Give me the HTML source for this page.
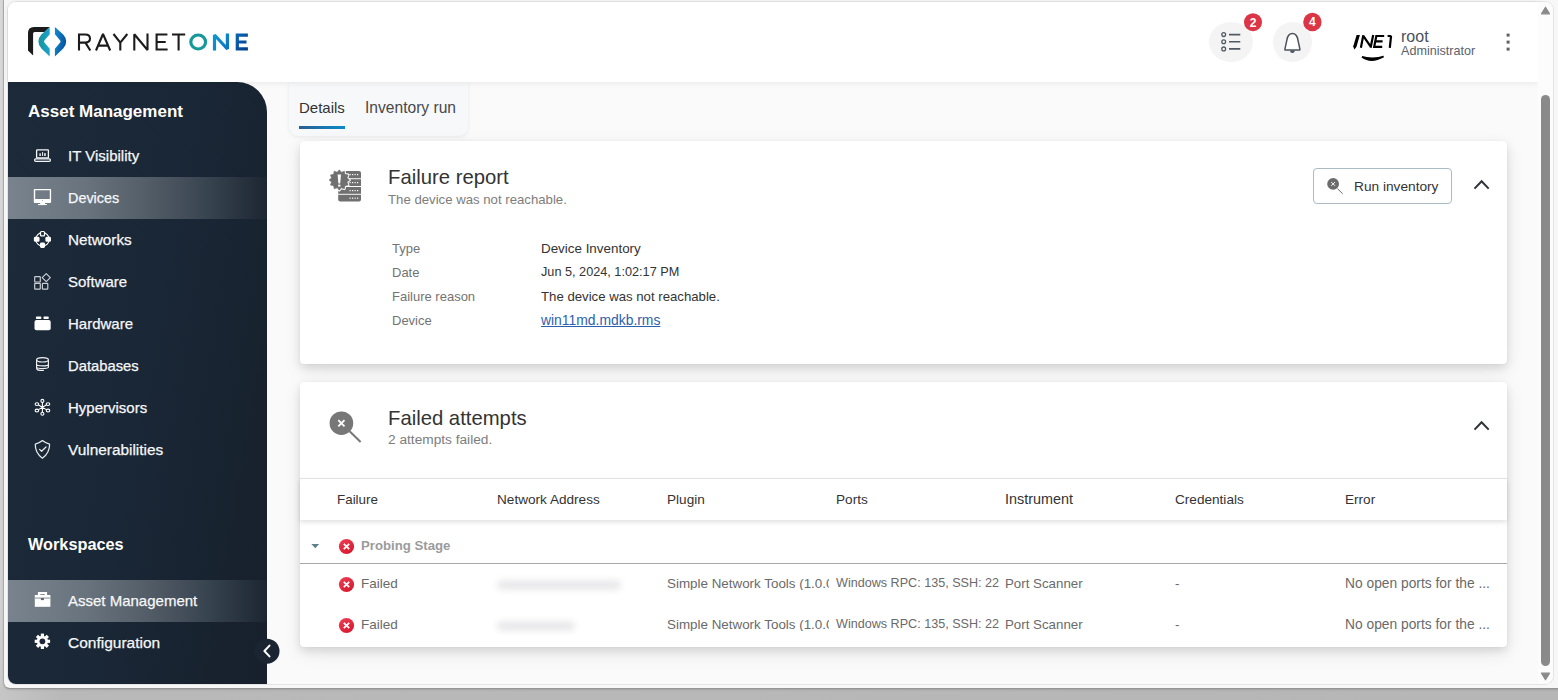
<!DOCTYPE html>
<html><head><meta charset="utf-8">
<style>
*{box-sizing:border-box;margin:0;padding:0}
html,body{width:1558px;height:700px;overflow:hidden}
body{position:relative;background:linear-gradient(#d8d8d8,#d2d2d2 600px,#c8c8c8);font-family:"Liberation Sans",sans-serif;color:#333}
.a{position:absolute}
.t{position:absolute;white-space:nowrap;line-height:1}
#bottom{left:0;top:687px;width:1558px;height:13px;background:linear-gradient(90deg,#c6c6c6 0,#b9b9b9 60px,#b6b6b6 100%)}
#frame{left:3px;top:-10px;width:1565px;height:699px;background:#f7f7f7;border-left:1px solid #a9a9a9;border-bottom:1px solid #959595;border-radius:0 0 0 7px;box-shadow:0 1px 2px rgba(0,0,0,.12)}
#lline{left:3px;top:0;width:1px;height:688px;background:#afafaf}
#win{left:8px;top:2px;width:1545px;height:682px;border-radius:8px;background:#fafafa;box-shadow:0 0 0 1px #e4e4e4}
#header{left:8px;top:2px;width:1530px;height:80px;background:#fff;border-radius:8px 0 0 0;box-shadow:0 1px 6px rgba(0,0,0,.08);z-index:3}
#sb{left:1538px;top:2px;width:15px;height:682px;background:#fcfcfc;border-radius:0 8px 8px 0;z-index:4}
#thumb{left:3px;top:93px;width:9px;height:571px;border-radius:5px;background:#8a8a8a}
#side{left:8px;top:82px;width:259px;height:602px;border-radius:0 30px 0 8px;background:linear-gradient(100deg,#1c2a3a 0%,#1a2736 50%,#17202c 100%);z-index:2;overflow:hidden}
.nav{position:absolute;left:0;width:259px;height:42px}
.nav.act{background:linear-gradient(90deg,#78838d 0%,#68737d 30%,#56616b 50%,#3b4653 75%,#1c2633 100%)}
.nav .lbl{position:absolute;left:60px;top:0;line-height:42px;font-size:15px;color:#f6f7f8;white-space:nowrap;-webkit-text-stroke:0.25px #f6f7f8}
.nav svg{position:absolute;left:26px;top:12px}
.sh{position:absolute;left:20px;font-size:17px;font-weight:bold;color:#fff;line-height:1;white-space:nowrap}
.card{position:absolute;background:#fff;border-radius:4px;box-shadow:0 4px 8px rgba(0,0,0,.09),0 6px 18px rgba(0,0,0,.09),0 0 2px rgba(0,0,0,.06)}
</style></head><body>
<div id="bottom" class="a"></div>
<div id="frame" class="a"></div>

<div id="win" class="a"></div>

<!-- header -->
<div id="header" class="a"></div>
<div id="sb" class="a"><div id="thumb" class="a"></div>
  <svg class="a" style="left:0;top:0" width="15" height="682"><path d="M3.5 11.8 L7.5 5.2 L11.5 11.8 Z" fill="#8a8a8a" stroke="#8a8a8a" stroke-width="1.2" stroke-linejoin="round"/><path d="M3.5 671.2 L7.5 677.8 L11.5 671.2 Z" fill="#8a8a8a" stroke="#8a8a8a" stroke-width="1.2" stroke-linejoin="round"/></svg>
</div>
<svg class="a" style="left:0;top:0;z-index:5" width="1558" height="82">
  <defs>
    <linearGradient id="gT" x1="0" y1="0.5" x2="1" y2="0.5"><stop offset="0" stop-color="#16939a"/><stop offset="1" stop-color="#19a3d0"/></linearGradient>
    <linearGradient id="gB" x1="0" y1="0.3" x2="1" y2="0.7"><stop offset="0" stop-color="#1088d0"/><stop offset="1" stop-color="#0a4c98"/></linearGradient>
    <linearGradient id="gN" x1="0" y1="0" x2="1" y2="1"><stop offset="0" stop-color="#0b99d6"/><stop offset="1" stop-color="#0a74bd"/></linearGradient>
    <linearGradient id="gE" x1="0" y1="0" x2="1" y2="1"><stop offset="0" stop-color="#0b63b0"/><stop offset="1" stop-color="#023f8c"/></linearGradient>
  </defs>
  <!-- logo mark -->
  <path d="M28 50.6 L28 33 Q28 27 34 27 L49.7 27 L44.6 32 L34.6 32 Q33.1 32 33.1 33.5 L33.1 55.4 Z" fill="#1b1b1b"/>
  <path d="M49.7 27 L49.7 34.2 L44.4 40.6 Q43.8 41.5 44.4 42.4 L49.7 48.8 L49.7 56.6 L41.4 48.6 Q38.4 45.4 38.4 41.5 Q38.4 37.6 41.4 34.4 Z" fill="url(#gT)"/>
  <path d="M54.9 27 L54.9 34.2 L60.2 40.6 Q60.8 41.5 60.2 42.4 L54.9 48.8 L54.9 56.6 L63.2 48.6 Q66.2 45.4 66.2 41.5 Q66.2 37.6 63.2 34.4 Z" fill="url(#gB)"/>
  <!-- letters -->
  <g fill="none" stroke="#1b1b1b" stroke-width="2.1" stroke-linecap="butt" stroke-linejoin="miter" stroke-miterlimit="1.5">
    <path d="M79 50.5 V34.5 H85.2 Q90 34.5 90 38.6 Q90 42.6 85.2 42.6 H79 M85.4 42.6 L90.3 50.5"/>
    <path d="M96 50.5 L103 34 L110.2 50.5 M98.2 45.6 H107.9"/>
    <path d="M113.5 34 L120.3 42.6 L127.3 34 M120.3 42.6 V50.5"/>
    <path d="M134.3 50.5 V34.3 L147.5 50 V33.5"/>
    <path d="M167.4 34.5 H156.6 V49.5 H167.6 M156.6 42 H165.7"/>
    <path d="M172 34.5 H185.2 M178.6 34.5 V50.5"/>
  </g>
  <ellipse cx="198.2" cy="42" rx="7.4" ry="7" fill="none" stroke="#17989a" stroke-width="3.2"/>
  <path d="M214.5 50.5 V35 L227.4 49 V33.5" fill="none" stroke="url(#gN)" stroke-width="3.2" stroke-miterlimit="1.5"/>
  <path d="M247.9 35.1 H237.3 V48.9 H247.9 M237.3 42 H246.5" fill="none" stroke="url(#gE)" stroke-width="3.2"/>
  <!-- list button -->
  <ellipse cx="1231" cy="42" rx="22" ry="20" fill="#f4f4f4"/>
  <g fill="none" stroke="#525a63" stroke-width="1.3"><circle cx="1223.7" cy="34.6" r="1.9"/><circle cx="1223.7" cy="41.7" r="1.9"/><circle cx="1223.7" cy="48.9" r="1.9"/></g>
  <g stroke="#525a63" stroke-width="1.6"><path d="M1229 34.6 H1240.3 M1229 41.7 H1240.3 M1229 48.9 H1240.3"/></g>
  <circle cx="1253" cy="22.2" r="9" fill="#dc3545"/>
  <text x="1253" y="26.6" text-anchor="middle" font-family="Liberation Sans" font-weight="bold" font-size="12" fill="#fff">2</text>
  <!-- bell -->
  <ellipse cx="1292.5" cy="42" rx="19.5" ry="20" fill="#f4f4f4"/>
  <path d="M1284.9 49.2 L1286.9 39.8 Q1288 33.6 1292.4 33.6 Q1296.8 33.6 1297.9 39.8 L1299.9 49.2 Q1300.2 50 1299.3 50 L1285.5 50 Q1284.6 50 1284.9 49.2 Z" fill="#fff" stroke="#4b535c" stroke-width="1.5" stroke-linejoin="round"/>
  <path d="M1289.9 50.4 Q1290.2 52.9 1292.4 52.9 Q1294.6 52.9 1294.9 50.4 Z" fill="#4b535c"/>
  <circle cx="1312.4" cy="22" r="9.2" fill="#dc3545"/>
  <text x="1312.4" y="26.4" text-anchor="middle" font-family="Liberation Sans" font-weight="bold" font-size="12" fill="#fff">4</text>
  <!-- avatar -->
  <path d="M1356.6 35 L1359.9 35 L1356.4 47 L1354.4 49.6 L1353.2 46.4 Z" fill="#000"/>
  <g fill="none" stroke="#000" stroke-width="2.2" stroke-linecap="butt">
   <path d="M1363.3 35.1 L1360.9 47.8 M1363.3 35.8 L1371 47.2 M1373.2 35 L1370.6 47.8"/>
   <path d="M1384.2 36 H1376.3 L1374.2 46.8 H1382.2 M1375.3 41.4 H1382.6"/>
   <path d="M1387.6 36 H1390.1 L1391 36.6 L1389.8 47.8"/>
  </g>
  <path d="M1362 56.9 Q1371 63.6 1383.6 56.6 Q1379 58.2 1372.4 58.4 Q1366 58.4 1362 56.9 Z" fill="#000" stroke="#000" stroke-width="1.7"/>
  <!-- kebab -->
  <g fill="#616161"><rect x="1506.6" y="33.6" width="3" height="3"/><rect x="1506.6" y="40.6" width="3" height="3"/><rect x="1506.6" y="47.6" width="3" height="3"/></g>
</svg>
<div class="t" style="left:1401px;top:29px;font-size:16px;color:#4a525c;z-index:6">root</div>
<div class="t" style="left:1401px;top:45px;font-size:12.6px;color:#5a626c;z-index:6">Administrator</div>

<!-- sidebar -->
<div id="side" class="a">
  <div class="sh" style="top:21px">Asset Management</div>
  <div class="nav" style="top:53px"><span class="lbl">IT Visibility</span></div>
  <div class="nav act" style="top:95px"><span class="lbl" style="font-size:14.4px">Devices</span></div>
  <div class="nav" style="top:137px"><span class="lbl" style="font-size:15.3px">Networks</span></div>
  <div class="nav" style="top:179px"><span class="lbl">Software</span></div>
  <div class="nav" style="top:221px"><span class="lbl">Hardware</span></div>
  <div class="nav" style="top:263px"><span class="lbl" style="font-size:14.8px">Databases</span></div>
  <div class="nav" style="top:305px"><span class="lbl">Hypervisors</span></div>
  <div class="nav" style="top:347px"><span class="lbl" style="font-size:15.4px">Vulnerabilities</span></div>
  <div class="sh" style="top:454px;font-size:16.3px">Workspaces</div>
  <div class="nav act" style="top:498px"><span class="lbl">Asset Management</span></div>
  <div class="nav" style="top:540px"><span class="lbl" style="font-size:15.5px">Configuration</span></div>
</div>


<!-- sidebar icons -->
<svg class="a" style="left:0;top:0;z-index:6" width="290" height="700">
 <g fill="none" stroke="#f4f6f8" stroke-width="1.3">
  <!-- laptop -->
  <rect x="36.6" y="149.9" width="11.8" height="7.9" rx="0.6"/>
  <rect x="34.6" y="158.9" width="15.8" height="2.4" rx="1.2"/>
 </g>
 <g fill="#f4f6f8">
  <rect x="39.4" y="153.3" width="1.4" height="2.7"/><rect x="42.1" y="152.1" width="1" height="3.9"/><rect x="44.2" y="153.1" width="1.5" height="2.9"/>
 </g>
 <!-- monitor -->
 <g fill="#ffffff">
  <path d="M34.6 188.9 H50.3 Q51.1 188.9 51.1 189.7 V202.1 Q51.1 202.9 50.3 202.9 H34.6 Q33.8 202.9 33.8 202.1 V189.7 Q33.8 188.9 34.6 188.9 Z M35.2 190.2 V198.9 H49.8 V190.2 Z" fill-rule="evenodd"/>
  <rect x="40.2" y="202.5" width="4.8" height="2"/><rect x="38" y="204" width="8.8" height="1.1"/>
 </g>
 <circle cx="42.4" cy="200.4" r="0.5" fill="#8a929a"/>
 <!-- networks -->
 <circle cx="42.5" cy="239.3" r="6.7" fill="none" stroke="#fff" stroke-width="1.1"/>
 <rect x="40.5" y="231.5" width="4" height="4.4" rx="1" fill="#1e2b3a" stroke="#fff" stroke-width="1.2"/>
 <rect x="33.9" y="236.8" width="5.6" height="5" rx="1.4" fill="#fff"/>
 <rect x="45.4" y="236.8" width="5.6" height="5" rx="1.4" fill="#fff"/>
 <rect x="40" y="242.4" width="5" height="5.5" rx="1.4" fill="#fff"/>
 <!-- software -->
 <g fill="none" stroke="#c9ced3" stroke-width="1.2">
  <rect x="34.7" y="276.6" width="5.6" height="5.4" rx="0.6"/>
  <rect x="34.7" y="283.3" width="5.6" height="5.8" rx="0.6"/>
  <rect x="42.4" y="283.3" width="5.4" height="5.8" rx="0.6"/>
  <path d="M46.25 273.6 L50.3 277.6 L46.25 281.6 L42.2 277.6 Z" stroke-linejoin="round"/>
 </g>
 <!-- hardware -->
 <g fill="#fff">
  <rect x="35.9" y="316.5" width="5.5" height="2.6" rx="1"/><rect x="43.4" y="316.5" width="5.4" height="2.6" rx="1"/>
  <rect x="34.5" y="319.9" width="16.2" height="10.4" rx="2"/>
 </g>
 <!-- databases -->
 <g fill="none" stroke="#eef0f2" stroke-width="1.2">
  <ellipse cx="42.5" cy="359.8" rx="5.9" ry="2.2"/>
  <path d="M36.6 360 V368 Q36.6 370.4 40 370.4 H43.9 M36.6 364.6 Q37 365.8 42.5 365.8 Q48.4 365.8 48.4 364.4 M36.6 367.4 Q37 368.5 42.5 368.5 Q48.4 368.5 48.4 367 M48.4 360 V367"/>
 </g>
 <!-- hypervisors -->
 <g fill="none" stroke="#fff" stroke-width="1.1">
  <path d="M42.4 407.3 V402.5 M42.4 407.3 V412.2 M42.4 407.3 L38.5 405 M42.4 407.3 L46.3 405 M42.4 407.3 L38.5 409.6 M42.4 407.3 L46.3 409.6"/>
  <circle cx="42.4" cy="400.9" r="1.5"/><circle cx="42.4" cy="413.8" r="1.5"/>
  <ellipse cx="36.9" cy="404.1" rx="1.8" ry="1.4"/><ellipse cx="48" cy="404.1" rx="1.8" ry="1.4"/>
  <ellipse cx="36.9" cy="410.5" rx="1.8" ry="1.4"/><ellipse cx="48" cy="410.5" rx="1.8" ry="1.4"/>
 </g>
 <circle cx="42.4" cy="407.3" r="0.9" fill="#fff"/>
 <!-- shield -->
 <g fill="none" stroke="#e8eaed" stroke-width="1.25" stroke-linejoin="round" stroke-linecap="round">
  <path d="M42.4 440.6 Q39 443.4 35.3 444.2 Q35 452.6 42.4 458.2 Q49.8 452.6 49.6 444.2 Q45.8 443.4 42.4 440.6 Z"/>
  <path d="M39.6 449.4 L41.6 451.3 L46 447"/>
 </g>
 <!-- briefcase -->
 <g fill="#fff">
  <rect x="37.9" y="592" width="9.2" height="3.2"/>
  <rect x="34.8" y="595" width="15.6" height="11.8"/>
 </g>
 <rect x="40.4" y="594.1" width="4.4" height="0.9" fill="#7a838c"/>
 <rect x="34.8" y="597.4" width="15.6" height="1.4" fill="#a9aeb4"/>
 <rect x="40.9" y="598" width="3" height="2.1" fill="#5d6670"/>
 <!-- gear -->
 <g transform="translate(42.4 641.3)">
  <path fill="#fff" fill-rule="evenodd" d="M-1.5 -7.7 H1.5 L1.9 -5.6 Q2.8 -5.3 3.6 -4.8 L5.4 -6 L7.5 -3.9 L6.3 -2.1 Q6.7 -1.3 6.9 -0.4 L7.7 -0.1 V2.9 L5.7 3.3 Q5.4 4.1 4.9 4.9 L6 6.7 L3.9 8.8 L2.1 7.6 Q1.3 8 0.4 8.2 Z" transform="translate(0 -0.5)" opacity="0"/>
  <circle r="5.6" fill="#fff"/>
  <g fill="#fff">
   <rect x="-1.6" y="-7.7" width="3.2" height="3" />
   <rect x="-1.6" y="-7.7" width="3.2" height="3" transform="rotate(45)"/>
   <rect x="-1.6" y="-7.7" width="3.2" height="3" transform="rotate(90)"/>
   <rect x="-1.6" y="-7.7" width="3.2" height="3" transform="rotate(135)"/>
   <rect x="-1.6" y="-7.7" width="3.2" height="3" transform="rotate(180)"/>
   <rect x="-1.6" y="-7.7" width="3.2" height="3" transform="rotate(225)"/>
   <rect x="-1.6" y="-7.7" width="3.2" height="3" transform="rotate(270)"/>
   <rect x="-1.6" y="-7.7" width="3.2" height="3" transform="rotate(315)"/>
  </g>
  <circle r="2.9" fill="#1c2837"/>
 </g>
 <!-- collapse button -->
 <circle cx="267" cy="651.2" r="12.5" fill="#1b2532"/>
 <path d="M269.5 645.6 L264.4 651 L269.5 656.4" fill="none" stroke="#fff" stroke-width="2" stroke-linecap="round" stroke-linejoin="round"/>
</svg>

<!-- tabs -->
<div class="a" style="left:289px;top:82px;width:179px;height:54px;background:#f7f8fa;border-radius:0 0 9px 9px;box-shadow:0 1px 4px rgba(0,0,0,.07)"></div>
<div class="t" style="left:299px;top:100px;font-size:15px;color:#333">Details</div>
<div class="t" style="left:365px;top:100px;font-size:15.6px;color:#484848">Inventory run</div>
<div class="a" style="left:299px;top:126px;width:46px;height:3px;background:linear-gradient(90deg,#295e91,#0a8bc9)"></div>

<!-- card 1 -->
<div class="card" style="left:300px;top:141px;width:1207px;height:223px"></div>
<div class="t" style="left:388px;top:167px;font-size:20.3px;color:#333">Failure report</div>
<div class="t" style="left:388px;top:193px;font-size:13.2px;color:#7d7d7d">The device was not reachable.</div>
<div class="t" style="left:392px;top:242px;font-size:13px;color:#737373">Type</div>
<div class="t" style="left:392px;top:266px;font-size:13px;color:#737373">Date</div>
<div class="t" style="left:392px;top:290px;font-size:13px;color:#737373">Failure reason</div>
<div class="t" style="left:392px;top:314px;font-size:13px;color:#737373">Device</div>
<div class="t" style="left:541px;top:242px;font-size:13.4px;color:#333">Device Inventory</div>
<div class="t" style="left:541px;top:266px;font-size:12.7px;color:#333">Jun 5, 2024, 1:02:17 PM</div>
<div class="t" style="left:541px;top:290px;font-size:13.2px;color:#333">The device was not reachable.</div>
<div class="t" style="left:541px;top:314px;font-size:13.9px;color:#2d5fae;text-decoration:underline">win11md.mdkb.rms</div>
<div class="a" style="left:1313px;top:168px;width:139px;height:36px;border:1px solid #a9bcc4;border-radius:4px;background:#fff"></div>
<div class="t" style="left:1354px;top:180px;font-size:13.7px;color:#333">Run inventory</div>

<!-- card 2 -->
<div class="card" style="left:300px;top:382px;width:1207px;height:265px"></div>
<div class="t" style="left:388px;top:408px;font-size:20.3px;color:#333">Failed attempts</div>
<div class="t" style="left:388px;top:433px;font-size:13.7px;color:#7d7d7d">2 attempts failed.</div>
<div class="a" style="left:300px;top:478px;width:1207px;height:1px;background:#e6e6e6"></div>
<div class="a" style="left:300px;top:479px;width:1207px;height:41px;background:#fff;box-shadow:0 2px 5px rgba(0,0,0,.13)"></div>
<div class="t" style="left:337px;top:493px;font-size:13.4px;color:#333">Failure</div>
<div class="t" style="left:497px;top:493px;font-size:13.6px;color:#333">Network Address</div>
<div class="t" style="left:667px;top:493px;font-size:13.6px;color:#333">Plugin</div>
<div class="t" style="left:836px;top:493px;font-size:13.6px;color:#333">Ports</div>
<div class="t" style="left:1005px;top:492px;font-size:14.4px;color:#333">Instrument</div>
<div class="t" style="left:1175px;top:493px;font-size:13.6px;color:#333">Credentials</div>
<div class="t" style="left:1345px;top:493px;font-size:13.6px;color:#333">Error</div>
<div class="a" style="left:300px;top:563px;width:1207px;height:1px;background:#a9a9a9"></div>
<div class="t" style="left:361px;top:539px;font-size:13.2px;font-weight:bold;color:#9b9b9b">Probing Stage</div>
<div class="t" style="left:361px;top:577px;font-size:13.5px;color:#6a6a6a">Failed</div>
<div class="t" style="left:361px;top:618px;font-size:13.5px;color:#6a6a6a">Failed</div>
<div class="a" style="left:497px;top:580px;width:124px;height:10px;border-radius:5px;background:#e9e9eb;filter:blur(3px)"></div>
<div class="t" style="left:667px;top:577px;font-size:13.4px;color:#6a6a6a;width:162px;overflow:hidden">Simple Network Tools (1.0.0)</div>
<div class="t" style="left:836px;top:577px;font-size:12.6px;color:#6a6a6a;width:165px;overflow:hidden">Windows RPC: 135, SSH: 22</div>
<div class="t" style="left:1005px;top:577px;font-size:13.3px;color:#6a6a6a">Port Scanner</div>
<div class="t" style="left:1175px;top:577px;font-size:13.3px;color:#6a6a6a">-</div>
<div class="t" style="left:1345px;top:577px;font-size:13.8px;color:#6a6a6a">No open ports for the ...</div>
<div class="a" style="left:497px;top:621px;width:78px;height:10px;border-radius:5px;background:#e9e9eb;filter:blur(3px)"></div>
<div class="t" style="left:667px;top:618px;font-size:13.4px;color:#6a6a6a;width:162px;overflow:hidden">Simple Network Tools (1.0.0)</div>
<div class="t" style="left:836px;top:618px;font-size:12.6px;color:#6a6a6a;width:165px;overflow:hidden">Windows RPC: 135, SSH: 22</div>
<div class="t" style="left:1005px;top:618px;font-size:13.3px;color:#6a6a6a">Port Scanner</div>
<div class="t" style="left:1175px;top:618px;font-size:13.3px;color:#6a6a6a">-</div>
<div class="t" style="left:1345px;top:618px;font-size:13.8px;color:#6a6a6a">No open ports for the ...</div>


<!-- card icons etc -->
<svg class="a" style="left:290px;top:130px;z-index:6" width="1230" height="530">
 <g transform="translate(-290 -130)">
  <!-- server with burst -->
  <defs>
   <mask id="m1"><rect x="320" y="160" width="50" height="50" fill="#fff"/><path d="M339.30 169.80 L341.37 172.27 L344.40 171.17 L344.96 174.34 L348.13 174.90 L347.03 177.93 L349.50 180.00 L347.03 182.07 L348.13 185.10 L344.96 185.66 L344.40 188.83 L341.37 187.73 L339.30 190.20 L337.23 187.73 L334.20 188.83 L333.64 185.66 L330.47 185.10 L331.57 182.07 L329.10 180.00 L331.57 177.93 L330.47 174.90 L333.64 174.34 L334.20 171.17 L337.23 172.27 Z" fill="#000" stroke="#000" stroke-width="2.6" stroke-linejoin="round"/></mask>
  </defs>
  <g fill="#707070" mask="url(#m1)">
   <path d="M340.2 171 H359 Q361 171 361 173 V178.2 H338.2 V173 Q338.2 171 340.2 171 Z"/>
   <rect x="338.2" y="179.2" width="22.8" height="6.8"/>
   <rect x="338.2" y="187" width="22.8" height="6.8"/>
   <path d="M338.2 194.8 H361 V199.4 Q361 201.4 359 201.4 H340.2 Q338.2 201.4 338.2 199.4 Z"/>
  </g>
  <g fill="#fff">
   <rect x="349.5" y="174" width="1.2" height="1.2"/><rect x="352" y="174" width="1.2" height="1.2"/><rect x="354.5" y="174" width="1.2" height="1.2"/><rect x="357" y="174" width="1.2" height="1.2"/>
   <rect x="349.5" y="182" width="1.2" height="1.2"/><rect x="352" y="182" width="1.2" height="1.2"/><rect x="354.5" y="182" width="1.2" height="1.2"/><rect x="357" y="182" width="1.2" height="1.2"/>
   <rect x="349.5" y="190" width="1.2" height="1.2"/><rect x="352" y="190" width="1.2" height="1.2"/><rect x="354.5" y="190" width="1.2" height="1.2"/><rect x="357" y="190" width="1.2" height="1.2"/>
   <rect x="349.5" y="197.6" width="1.2" height="1.2"/><rect x="352" y="197.6" width="1.2" height="1.2"/><rect x="354.5" y="197.6" width="1.2" height="1.2"/><rect x="357" y="197.6" width="1.2" height="1.2"/>
  </g>
  <path fill="#707070" d="M339.30 169.80 L341.37 172.27 L344.40 171.17 L344.96 174.34 L348.13 174.90 L347.03 177.93 L349.50 180.00 L347.03 182.07 L348.13 185.10 L344.96 185.66 L344.40 188.83 L341.37 187.73 L339.30 190.20 L337.23 187.73 L334.20 188.83 L333.64 185.66 L330.47 185.10 L331.57 182.07 L329.10 180.00 L331.57 177.93 L330.47 174.90 L333.64 174.34 L334.20 171.17 L337.23 172.27 Z" stroke="#707070" stroke-width="0.6" stroke-linejoin="round"/>
  <path fill="#fff" d="M337.6 174.4 H341 L340.2 183.4 H338.4 Z"/>
  <rect x="338.2" y="184.6" width="2.2" height="2" fill="#fff"/>

  <!-- run inventory icon -->
  <circle cx="1333.1" cy="183.9" r="5.9" fill="#6c6c6c"/>
  <path d="M1331.3 182.1 L1335 185.8 M1335 182.1 L1331.3 185.8" stroke="#fff" stroke-width="1"/>
  <path d="M1337.4 188.6 L1342.7 193.8" stroke="#6c6c6c" stroke-width="1"/>
  <!-- chevrons -->
  <path d="M1474.5 188.6 L1481.6 181.2 L1488.7 188.6" fill="none" stroke="#2e3338" stroke-width="2"/>
  <path d="M1474.5 429.6 L1481.6 422.2 L1488.7 429.6" fill="none" stroke="#2e3338" stroke-width="2"/>

  <!-- failed attempts icon -->
  <circle cx="341.4" cy="423.2" r="11.8" fill="#777"/>
  <path d="M338.3 420.1 L344.5 426.3 M344.5 420.1 L338.3 426.3" stroke="#fff" stroke-width="1.9"/>
  <path d="M349.6 431.2 L360.6 442" stroke="#777" stroke-width="2"/>

  <!-- caret -->
  <path d="M311.3 544 L319.2 544 L315.25 548.2 Z" fill="#5e7f8c"/>
  <!-- red x icons -->
  <defs><linearGradient id="gr" x1="0" y1="0" x2="0.6" y2="1"><stop offset="0" stop-color="#ef4056"/><stop offset="1" stop-color="#d91a30"/></linearGradient></defs>
  <g>
   <circle cx="346.5" cy="546.5" r="7.6" fill="url(#gr)"/>
   <path d="M343.8 543.8 L349.2 549.2 M349.2 543.8 L343.8 549.2" stroke="#fff" stroke-width="1.8"/>
   <circle cx="346.5" cy="584.5" r="7.6" fill="url(#gr)"/>
   <path d="M343.8 581.8 L349.2 587.2 M349.2 581.8 L343.8 587.2" stroke="#fff" stroke-width="1.8"/>
   <circle cx="346.5" cy="625.5" r="7.6" fill="url(#gr)"/>
   <path d="M343.8 622.8 L349.2 628.2 M349.2 622.8 L343.8 628.2" stroke="#fff" stroke-width="1.8"/>
  </g>
 </g>
</svg>
</body></html>
